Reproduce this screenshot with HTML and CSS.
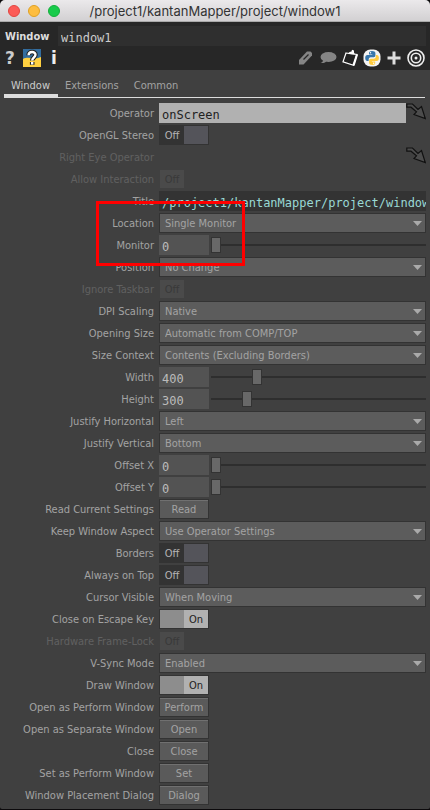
FILE: index.html
```html
<!DOCTYPE html>
<html lang="en">
<head>
<meta charset="utf-8">
<meta name="viewport" content="width=device-width">
<title>/project1/kantanMapper/project/window1</title>
<link rel="stylesheet" href="styles.css">
</head>
<body>
<div class="window">
  <header class="titlebar">
    <div class="lights"><i class="light close"></i><i class="light minimize"></i><i class="light zoom"></i></div>
    <h1>/project1/kantanMapper/project/window1</h1>
  </header>
  <section class="head">
    <div class="namebar"><label for="opname">Window</label><input id="opname" class="opname" value="window1"></div>
    <div class="toolbar">
      <button class="tool" aria-label="Help"><span class="glyph dim">?</span></button>
      <button class="tool" aria-label="Python help"><svg width="18" height="18" viewBox="0 0 18 18"><path fill="#336d9f" d="M0 0h18v10H0z"/><path fill="#ffd040" d="M0 10c5-3 12 1 18-2v10H0z"/><path d="M5.600 6.200C5.600 2 12.500 2 12.500 5.800c0 2.700-3.300 2.700-3.300 5.700M9.200 13v2.800" fill="none" stroke="#222" stroke-width="4.600"/><path d="M5.600 6.200C5.600 2 12.500 2 12.500 5.800c0 2.700-3.300 2.700-3.300 5.700M9.200 13v2.500" fill="none" stroke="#fff" stroke-width="2.400"/></svg></button>
      <button class="tool" aria-label="Info"><span class="glyph">i</span></button>
      <span class="spacer"></span>
      <button class="tool" aria-label="Edit"><svg width="18" height="18" viewBox="0 0 18 18"><path fill="#858585" d="M2 15.500v-4.500l8-8.500h3.500l1.500 1.500v2.500l-8.500 9z"/><path d="M6.500 10.500l5-5" stroke="#272727" stroke-width="1.300"/></svg></button>
      <button class="tool" aria-label="Comment"><svg width="18" height="18" viewBox="0 0 18 18"><ellipse cx="9.500" cy="8" rx="8" ry="5" fill="#858585"/><path fill="#858585" d="M4 11c0 1.500-.8 2.500-2.500 3 3 .4 5.500-.6 6.500-2.500z"/></svg></button>
      <button class="tool" aria-label="Clipboard"><svg width="18" height="18" viewBox="0 0 18 18"><path d="M5 4l11 1.500-3.500 10.800-10.500-3.500z" fill="#222" stroke="#fff" stroke-width="1.200"/><path d="M16 5.500l-3.500 10.800" stroke="#fff" stroke-width="2.200"/><path fill="#fff" d="M7 5l1.500-2 2-.5L11 .8l2 .7v2l1 2z"/></svg></button>
      <button class="tool" aria-label="Python"><svg width="18" height="18" viewBox="0 0 18 18"><rect x=".5" y=".5" width="17" height="17" rx="7" fill="#f4f4f4"/><path fill="#3776ab" d="M9 2C6.500 2 6 3 6 4v1.500h3.300V6H4.500C3 6 2.200 7.300 2.200 9s.8 3 2.200 3H5.700v-1.800c0-1.200 1-2 2-2h3c1 0 1.700-.8 1.700-1.700V4c0-1.300-1.300-2-3.400-2z"/><path fill="#ffcb3d" d="M9.200 16c2.500 0 3-1 3-2v-1.500H8.900V12h4.800c1.500 0 2.200-1.300 2.200-3s-.8-3-2.200-3h-.9v1.800c0 1.200-1 2-2 2h-3c-1 0-1.700.8-1.700 1.700V14c0 1.300 1.300 2 3.100 2z"/><circle cx="7.500" cy="3.800" r=".7" fill="#fff"/><circle cx="10.700" cy="14.200" r=".7" fill="#fff"/></svg></button>
      <button class="tool" aria-label="Add"><svg width="18" height="18" viewBox="0 0 18 18"><path d="M9 2.500v13M2.500 9h13" stroke="#ddd" stroke-width="3"/></svg></button>
      <button class="tool" aria-label="Target"><svg width="18" height="18" viewBox="0 0 18 18" fill="none" stroke="#eee" stroke-width="1.600"><circle cx="9" cy="9" r="8"/><circle cx="9" cy="9" r="4.700"/><circle cx="9" cy="9" r="1.500" fill="#eee" stroke="none"/></svg></button>
    </div>
  </section>
  <nav class="tabs"><a href="#" class="active">Window</a><a href="#">Extensions</a><a href="#">Common</a></nav>
  <form class="params">
    <div class="row"><label for="p1">Operator</label><div class="control"><input id="p1" class="text source" value="onScreen"><button type="button" class="pick" aria-label="Pick operator"><svg width="20" height="20" viewBox="0 0 20 20"><path d="M.8 4.200V1h5.700L12 6.500l3.500-3L19.300 15.500 8 11.500l2.500-2.700L5 4.200z" fill="#4c4c4c" stroke="#111" stroke-width="1.200"/></svg></button></div></div>
    <div class="row"><label for="p2">OpenGL Stereo</label><div class="control"><span class="toggle"><input type="checkbox" id="p2"><span>Off</span></span></div></div>
    <div class="row disabled"><label for="p3">Right Eye Operator</label><div class="control end"><button type="button" id="p3" class="pick" aria-label="Pick right eye operator"><svg width="20" height="20" viewBox="0 0 20 20"><path d="M.8 4.200V1h5.700L12 6.500l3.500-3L19.300 15.500 8 11.500l2.500-2.700L5 4.200z" fill="#4c4c4c" stroke="#111" stroke-width="1.200"/></svg></button></div></div>
    <div class="row disabled"><label for="p4">Allow Interaction</label><div class="control"><span class="toggle"><input type="checkbox" id="p4" disabled><span>Off</span></span></div></div>
    <div class="row"><label for="p5">Title</label><div class="control"><input id="p5" class="text expression" value="/project1/kantanMapper/project/window"></div></div>
    <div class="row"><label for="p6">Location</label><div class="control menu"><select id="p6"><option>Single Monitor</option></select></div></div>
    <div class="row"><label for="p7">Monitor</label><div class="control"><input id="p7" class="text number" value="0"><input type="range" aria-label="Monitor slider" value="0"></div></div>
    <div class="row"><label for="p8">Position</label><div class="control menu"><select id="p8"><option>No Change</option></select></div></div>
    <div class="row disabled"><label for="p9">Ignore Taskbar</label><div class="control"><span class="toggle"><input type="checkbox" id="p9" disabled><span>Off</span></span></div></div>
    <div class="row"><label for="p10">DPI Scaling</label><div class="control menu"><select id="p10"><option>Native</option></select></div></div>
    <div class="row"><label for="p11">Opening Size</label><div class="control menu"><select id="p11"><option>Automatic from COMP/TOP</option></select></div></div>
    <div class="row"><label for="p12">Size Context</label><div class="control menu"><select id="p12"><option>Contents (Excluding Borders)</option></select></div></div>
    <div class="row"><label for="p13">Width</label><div class="control"><input id="p13" class="text number" value="400"><input type="range" aria-label="Width slider" value="20"></div></div>
    <div class="row"><label for="p14">Height</label><div class="control"><input id="p14" class="text number" value="300"><input type="range" aria-label="Height slider" value="15"></div></div>
    <div class="row"><label for="p15">Justify Horizontal</label><div class="control menu"><select id="p15"><option>Left</option></select></div></div>
    <div class="row"><label for="p16">Justify Vertical</label><div class="control menu"><select id="p16"><option>Bottom</option></select></div></div>
    <div class="row"><label for="p17">Offset X</label><div class="control"><input id="p17" class="text number" value="0"><input type="range" aria-label="Offset X slider" value="0"></div></div>
    <div class="row"><label for="p18">Offset Y</label><div class="control"><input id="p18" class="text number" value="0"><input type="range" aria-label="Offset Y slider" value="0"></div></div>
    <div class="row"><label for="p19">Read Current Settings</label><div class="control"><button type="button" class="pulse" id="p19">Read</button></div></div>
    <div class="row"><label for="p20">Keep Window Aspect</label><div class="control menu"><select id="p20"><option>Use Operator Settings</option></select></div></div>
    <div class="row"><label for="p21">Borders</label><div class="control"><span class="toggle"><input type="checkbox" id="p21"><span>Off</span></span></div></div>
    <div class="row"><label for="p22">Always on Top</label><div class="control"><span class="toggle"><input type="checkbox" id="p22"><span>Off</span></span></div></div>
    <div class="row"><label for="p23">Cursor Visible</label><div class="control menu"><select id="p23"><option>When Moving</option></select></div></div>
    <div class="row"><label for="p24">Close on Escape Key</label><div class="control"><span class="toggle on"><input type="checkbox" id="p24" checked><span>On</span></span></div></div>
    <div class="row disabled"><label for="p25">Hardware Frame-Lock</label><div class="control"><span class="toggle"><input type="checkbox" id="p25" disabled><span>Off</span></span></div></div>
    <div class="row"><label for="p26">V-Sync Mode</label><div class="control menu"><select id="p26"><option>Enabled</option></select></div></div>
    <div class="row"><label for="p27">Draw Window</label><div class="control"><span class="toggle on"><input type="checkbox" id="p27" checked><span>On</span></span></div></div>
    <div class="row"><label for="p28">Open as Perform Window</label><div class="control"><button type="button" class="pulse" id="p28">Perform</button></div></div>
    <div class="row"><label for="p29">Open as Separate Window</label><div class="control"><button type="button" class="pulse" id="p29">Open</button></div></div>
    <div class="row"><label for="p30">Close</label><div class="control"><button type="button" class="pulse" id="p30">Close</button></div></div>
    <div class="row"><label for="p31">Set as Perform Window</label><div class="control"><button type="button" class="pulse" id="p31">Set</button></div></div>
    <div class="row"><label for="p32">Window Placement Dialog</label><div class="control"><button type="button" class="pulse" id="p32">Dialog</button></div></div>
    <div class="highlight"></div>
  </form>
</div>
</body>
</html>
```
FILE: styles.css
```css
* { box-sizing: border-box; }
body { margin: 0; background: #0c0a0c; }
.window, button, select {
  font-family: "DejaVu Sans Condensed", "DejaVu Sans", sans-serif;
  font-stretch: condensed;
  font-size: 11px;
}
.window { background: #404040; color: #a3a3a3; border-radius: 5px 5px 2px 2px; overflow: hidden; }
button { border: 0; padding: 0; background: none; color: inherit; }
input { border: 0; margin: 0; padding: 0; border-radius: 0; }

.titlebar {
  display: grid;
  grid-template-columns: 60px 1fr 60px;
  align-items: center;
  height: 22px;
  padding: 0 8px;
  background: linear-gradient(#ebe9eb, #d2d0d2);
  border-bottom: 1px solid #aaa;
}
.titlebar h1 { margin: 0; text-align: center; white-space: nowrap; font: 400 13px/22px Inter, sans-serif; color: #333; }
.lights { display: flex; gap: 8px; }
.light { width: 12px; height: 12px; border-radius: 50%; border: 1px solid; }
.close { background: #fc5b57; border-color: #e14640; }
.minimize { background: #fdbd40; border-color: #dfa023; }
.zoom { background: #18cb4b; border-color: #14ae3c; }

.head { background: #272727; padding: 4px 4px 0; }
.namebar { display: flex; height: 20px; }
.namebar label { width: 54px; line-height: 22px; padding-left: 1px; font-weight: 700; color: #ddd; }
.opname, .text { font-family: "DejaVu Sans Mono", monospace; font-size: 12px; }
.opname { flex: 1; min-width: 0; padding: 3px 3px 0; background: #2f2f2f; color: #ccc; }
.toolbar { display: flex; align-items: center; gap: 4px; height: 24px; padding-right: 1px; }
.tool { display: grid; place-items: center; width: 18px; height: 18px; }
.tool:first-child { width: 12px; margin-right: 3px; }
.spacer { flex: 1; }
.glyph { font: 700 17px/18px "DejaVu Sans", sans-serif; color: #eee; }
.dim { color: #ccc; }

.tabs { display: flex; height: 28px; margin: 0 5px 5px 4px; border-bottom: 1px solid #ddd; }
.tabs a { padding: 0 8px 0 7px; line-height: 32px; color: #a3a3a3; text-decoration: none; }
.tabs .active { color: #ccc; box-shadow: inset 0 -3px #ddd; }

.params { position: relative; display: grid; gap: 2px; padding: 0 4px 4px 0; }
.row { display: grid; grid-template: 20px / 154px 1fr; column-gap: 5px; }
.row > label { text-align: right; line-height: 22px; white-space: nowrap; }
.disabled > label { color: #606060; }
.control { display: flex; min-width: 0; }
.end { justify-content: flex-end; }
.text { flex: 1; min-width: 0; padding: 3px 0 0 3px; }
.source { background: #b1b1b1; color: #222; }
.expression { background: #333; color: #9ad9d5; }
.number { flex: 0 0 50px; background: #535353; color: #bbb; }
.pick { width: 20px; height: 20px; }
.pick svg { display: block; }

.menu { position: relative; }
.menu::after {
  content: "";
  position: absolute;
  right: 4px;
  top: 8px;
  width: 9px;
  height: 5px;
  background: #aaa;
  clip-path: polygon(0 0, 100% 0, 50% 100%);
  pointer-events: none;
}
select { flex: 1; min-width: 0; appearance: none; margin: 0; padding: 0 5px; border: 1px solid #333; border-radius: 0; background: #5c5c5c; color: #a3a3a3; }
.pulse { width: 50px; border: 1px solid #333; background: #5a5a5a; box-shadow: inset 0 1px #707070; }

.toggle { position: relative; width: 50px; border: 1px solid #333; background: linear-gradient(90deg, #333 24px, #54545a 24px); line-height: 20px; }
.toggle span { display: block; width: 24px; height: 18px; text-align: center; color: #b4b4b4; }
.toggle input { position: absolute; inset: 0; width: 100%; height: 100%; opacity: 0; }
.on { background: linear-gradient(90deg, #8d8d8d 24px, #b1b1b1 24px); }
.toggle.on span { margin-left: 24px; color: #222; }
.disabled .toggle { width: 26px; border-color: #404040; background: #4a4a4a; }
.disabled .toggle span { color: #393939; }

input[type="range"] { flex: 1; min-width: 0; margin-left: 2px; appearance: none; background: linear-gradient(#2e2e2e, #2e2e2e) center / 100% 2px no-repeat; }
input[type="range"]::-webkit-slider-thumb { appearance: none; width: 10px; height: 16px; background: #686868; border: 1px solid #333; }

.highlight { position: absolute; left: 96px; top: 98px; width: 149px; height: 65px; border: 3px solid #f00; pointer-events: none; }
```
